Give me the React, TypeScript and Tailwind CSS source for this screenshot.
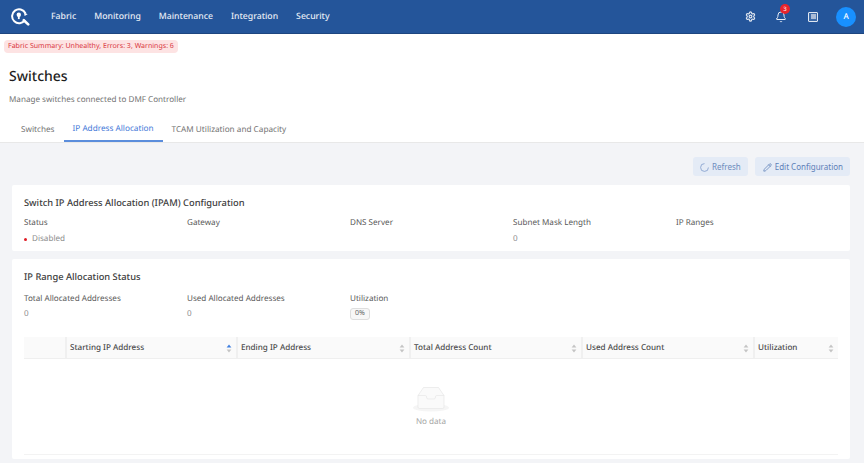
import { Settings, Bell, Pencil } from "lucide-react";

const navItems = ["Fabric", "Monitoring", "Maintenance", "Integration", "Security"];
const infoCols = ["Status", "Gateway", "DNS Server", "Subnet Mask Length", "IP Ranges"];

const columns = [
  { label: "Starting IP Address", width: "w-[171px]", active: true },
  { label: "Ending IP Address", width: "w-[173px]" },
  { label: "Total Address Count", width: "w-[172px]" },
  { label: "Used Address Count", width: "w-[172px]" },
  { label: "Utilization", width: "flex-1" },
];

function SortIcon({ active }: { active?: boolean }) {
  return (
    <svg width="6" height="9" viewBox="0 0 6 9" className="shrink-0">
      <path d="M3 0.5 L5.4 3.6 H0.6 Z" fill={active ? "#3f7fe0" : "#c4c4c4"} />
      <path d="M3 8.5 L5.4 5.4 H0.6 Z" fill="#c4c4c4" />
    </svg>
  );
}

function Logo() {
  return (
    <svg width="20" height="18" viewBox="0 0 20 18" fill="none">
      <path d="M15.4 5.2 A7 7 0 1 0 15 12" stroke="white" strokeWidth="2" />
      <path d="M14 4.2 L17.6 6.2 L14.6 8 Z" fill="white" />
      <circle cx="8.8" cy="6.8" r="2.2" fill="white" />
      <path d="M7.9 7.5h1.8v3.6H7.9z" fill="white" />
      <path d="M13.8 12.2l4.4 4.2" stroke="white" strokeWidth="2.6" strokeLinecap="round" />
    </svg>
  );
}

function EmptyBox() {
  return (
    <svg width="36" height="25" viewBox="0 0 36 25" fill="none">
      <ellipse cx="18" cy="20.8" rx="18" ry="3.8" fill="#f5f5f5" />
      <path d="M5 8.5 L10.5 0.5 H25.5 L31 8.5 V20 Q31 21.5 29.5 21.5 H6.5 Q5 21.5 5 20 Z" fill="#fafafa" stroke="#e6e6e6" strokeWidth="0.7" />
      <path d="M5 8.5 H12.5 Q13.5 8.5 13.5 10 Q13.5 12 15 12 H21 Q22.5 12 22.5 10 Q22.5 8.5 23.5 8.5 H31" fill="none" stroke="#e6e6e6" strokeWidth="0.7" />
    </svg>
  );
}

export default function App() {
  return (
    <div className="flex h-[463px] w-[864px] flex-col overflow-hidden bg-white font-['Inter',sans-serif] text-[8.1px] text-[#595959] antialiased [text-rendering:geometricPrecision]">
      <header className="flex h-[34px] shrink-0 items-center border-b border-[#1d4680] bg-[#24559a] pl-[10px] pr-[8px] text-white">
        <Logo />
        <nav className="ml-[21px] flex gap-[18px] text-[8.7px] font-medium text-[#e6ecf5]">
          {navItems.map((item) => (
            <span key={item}>{item}</span>
          ))}
        </nav>
        <div className="ml-auto flex items-center">
          <Settings className="h-[11px] w-[11px] text-[#dfe6f0]" strokeWidth={2.6} />
          <div className="relative ml-[19px]">
            <Bell className="h-[12px] w-[12px] text-[#e8edf5]" strokeWidth={2} />
            <span className="absolute -top-[7px] left-[5px] flex h-[10px] w-[10px] items-center justify-center rounded-full bg-[#e8242c] text-[6px] leading-none text-white">
              3
            </span>
          </div>
          <div className="ml-[21px] flex h-[10px] w-[10px] items-center justify-center rounded-[1px] border border-[#dfe6f0] bg-[#3c6aa8]">
            <div className="h-[5px] w-[5px] bg-[#a9bbd6]" />
          </div>
          <div className="ml-[18px] flex h-[20px] w-[20px] items-center justify-center rounded-full bg-[#1890ff] text-[8px] font-medium text-white">
            A
          </div>
        </div>
      </header>

      <div className="flex h-[109px] shrink-0 flex-col border-b border-[#e8e8e8] bg-white">
        <div className="pl-[4px] pt-[6px]">
          <span className="inline-flex h-[13px] items-center rounded-[4px] bg-[#fde3e3] px-[4px] text-[7.05px] text-[#d9363e]">
            Fabric Summary: Unhealthy, Errors: 3, Warnings: 6
          </span>
        </div>
        <h1 className="ml-[9px] mt-[15px] text-[14px] font-medium leading-[18px] text-[#1f1f1f]">Switches</h1>
        <p className="ml-[9px] mt-[8px] leading-[12px] text-[#737373]">Manage switches connected to DMF Controller</p>
        <div className="mt-auto flex pl-[12px] text-[8.2px] text-[#737373]">
          <div className="flex h-[28px] items-center px-[9px] pt-[4px]">Switches</div>
          <div className="flex h-[28px] items-center border-b-2 border-[#5b8ddc] px-[9px] pt-[4px] text-[#3f78d8]">IP Address Allocation</div>
          <div className="flex h-[28px] items-center px-[9px] pt-[4px]">TCAM Utilization and Capacity</div>
        </div>
      </div>

      <main className="flex min-h-0 flex-1 flex-col gap-[8px] bg-[#f3f4f7] pb-[4px] pl-[12px] pr-[14px] pt-[14px]">
        <div className="mb-[1px] flex h-[19px] shrink-0 items-center justify-end gap-[7px] text-[8px]">
          <button className="flex h-[19px] items-center gap-[3px] rounded-[3px] bg-[#e4ebf6] px-[7px] pt-[1px] text-[#6d8cbd]">
            <svg width="9" height="9" viewBox="0 0 9 9" fill="none">
              <path d="M4.5 0.6 A3.9 3.9 0 1 0 8.4 4.5" stroke="#7f9ccb" strokeWidth="0.8" />
            </svg>
            Refresh
          </button>
          <button className="flex h-[19px] items-center gap-[3px] rounded-[3px] bg-[#e4ebf6] pl-[8px] pr-[7px] pt-[1px] text-[#5d80b8]">
            <Pencil className="h-[9px] w-[9px]" strokeWidth={2} />
            Edit Configuration
          </button>
        </div>

        <section className="h-[66px] shrink-0 rounded-[2px] bg-white px-[12px] pt-[11px]">
          <h2 className="text-[9.3px] font-medium leading-[13px] text-[#3d3d3d]">Switch IP Address Allocation (IPAM) Configuration</h2>
          <div className="mt-[8px] grid grid-cols-[163px_163px_163px_163px_1fr] leading-[12px]">
            {infoCols.map((col) => (
              <span key={col}>{col}</span>
            ))}
          </div>
          <div className="mt-[4px] grid grid-cols-[163px_163px_163px_163px_1fr] leading-[12px] text-[#8c8c8c]">
            <span className="flex items-center gap-[5px]">
              <i className="h-[3px] w-[3px] rounded-full bg-[#e01b24]" />
              Disabled
            </span>
            <span />
            <span />
            <span>0</span>
            <span />
          </div>
        </section>

        <section className="flex min-h-0 flex-1 flex-col rounded-[2px] bg-white px-[12px] pt-[11px]">
          <h2 className="text-[9.3px] font-medium leading-[13px] text-[#3d3d3d]">IP Range Allocation Status</h2>
          <div className="mt-[10px] grid grid-cols-[163px_163px_1fr] leading-[12px]">
            <span>Total Allocated Addresses</span>
            <span>Used Allocated Addresses</span>
            <span>Utilization</span>
          </div>
          <div className="mt-[2px] grid grid-cols-[163px_163px_1fr] items-center leading-[12px] text-[#8c8c8c]">
            <span>0</span>
            <span>0</span>
            <span>
              <span className="inline-flex h-[12px] w-[20px] items-center justify-center rounded-[3px] border border-[#dedede] bg-[#f7f7f7] text-[7px] text-[#666666]">
                0%
              </span>
            </span>
          </div>

          <div className="mt-[17px] flex h-[22px] shrink-0 border-b border-[#efefef] bg-[#fafafa] font-medium text-[#4a4a4a]">
            <div className="w-[41px] shrink-0" />
            {columns.map((col) => (
              <div key={col.label} className={`${col.width} flex items-center justify-between border-l-2 border-[#f0f0f0] pl-[3px] pr-[4px] pt-[1px]`}>
                <span>{col.label}</span>
                <SortIcon active={col.active} />
              </div>
            ))}
          </div>

          <div className="mb-[4px] flex flex-1 flex-col items-center border-b border-[#f3f3f3] pt-[28px]">
            <EmptyBox />
            <span className="mt-[4px] leading-[12px] text-[#a6a6a6]">No data</span>
          </div>
        </section>
      </main>
    </div>
  );
}
